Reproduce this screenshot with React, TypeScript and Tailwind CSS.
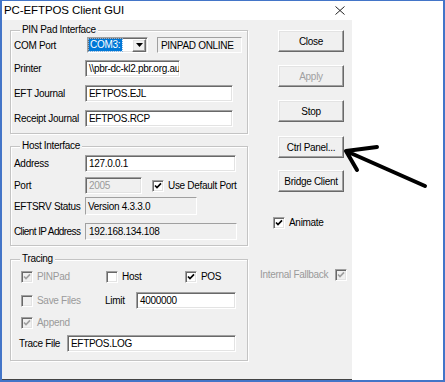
import React from 'react';

const sunken =
  'border border-t-[#a0a0a0] border-l-[#a0a0a0] border-b-white border-r-white shadow-[inset_1px_1px_0_#696969,inset_-1px_-1px_0_#e3e3e3]';
const staticEdge = 'border border-t-[#a0a0a0] border-l-[#a0a0a0] border-b-white border-r-white';
const raised =
  'border border-t-white border-l-white border-b-[#696969] border-r-[#696969] shadow-[inset_-1px_-1px_0_#a0a0a0,inset_1px_1px_0_#e3e3e3]';

function Field({ className, children, gray, dim }: { className: string; children: React.ReactNode; gray?: boolean; dim?: boolean }) {
  return (
    <div
      className={`${sunken} ${gray ? 'bg-[#f0f0f0]' : 'bg-white'} ${dim ? 'text-[#9a9a9a]' : 'text-black'} flex items-center overflow-hidden whitespace-nowrap pl-[3px] ${className}`}
    >
      {children}
    </div>
  );
}

function Static({ className, children }: { className: string; children: React.ReactNode }) {
  return (
    <div className={`${staticEdge} bg-[#f0f0f0] flex items-center overflow-hidden whitespace-nowrap ${className}`}>{children}</div>
  );
}

function Check({ checked, disabled }: { checked?: boolean; disabled?: boolean }) {
  return (
    <span className={`${sunken} ${disabled ? 'bg-[#f0f0f0]' : 'bg-white'} w-[12px] h-[12px] shrink-0 flex items-center justify-center`}>
      {checked && (
        <svg width="8" height="8" viewBox="0 0 8 8">
          <path d="M1 3.5 L3 5.6 L7 1.4" fill="none" stroke={disabled ? '#a0a0a0' : '#000'} strokeWidth="1.7" />
        </svg>
      )}
    </span>
  );
}

function CheckLabel({ label, checked, disabled, className }: { label: string; checked?: boolean; disabled?: boolean; className?: string }) {
  return (
    <div className={`flex items-center gap-[4px] h-[13px] whitespace-nowrap ${disabled ? 'text-[#9a9a9a]' : 'text-black'} ${className ?? ''}`}>
      <Check checked={checked} disabled={disabled} />
      <span>{label}</span>
    </div>
  );
}

function Btn({ label, disabled, className }: { label: string; disabled?: boolean; className: string }) {
  return (
    <div
      className={`${raised} bg-[#f0f0f0] ml-[30px] w-[66px] h-[22px] flex items-center justify-center ${disabled ? 'text-[#a0a0a0]' : 'text-black'} ${className}`}
    >
      {label}
    </div>
  );
}

function Group({ title, className, children }: { title: string; className: string; children: React.ReactNode }) {
  return (
    <fieldset className={`border border-[#c4c4c4] shadow-[inset_1px_1px_0_#fff,1px_1px_0_#fff] pl-[3px] ${className}`}>
      <legend className="ml-[6px] px-[2px] leading-[12px] bg-[#f0f0f0]">{title}</legend>
      {children}
    </fieldset>
  );
}

export default function App() {
  return (
    <div className="w-[445px] h-[382px] bg-white border-[#4375c8] border-t border-x-2 border-b-2 flex flex-col relative text-[10px] tracking-[-0.3px] font-['Liberation_Sans',Arial,sans-serif] text-black">
      {/* title bar */}
      <div className="h-[19px] flex items-center pl-[2px] shrink-0">
        <span className="text-[11.5px] tracking-[-0.1px]">PC-EFTPOS Client GUI</span>
        <svg className="ml-auto mr-[98px]" width="10" height="9" viewBox="0 0 10 9">
          <path d="M0.5 0.5 L9.5 8.5 M9.5 0.5 L0.5 8.5" stroke="#222" strokeWidth="1" />
        </svg>
      </div>

      <div className="flex-1 flex">
        <div className="w-[350px] bg-[#f0f0f0] border-b border-[#444] flex pl-[8px] pt-[4px]">
          {/* left column */}
          <div className="w-[238px] flex flex-col">
            <Group title="PIN Pad Interface" className="pb-[6px]">
              <div className="flex items-center h-[16px] mt-[1px]">
                <span className="w-[71px]">COM Port</span>
                <div className={`${sunken} bg-white ml-[2px] w-[61px] h-[16px] flex items-center pl-[1px] pr-[1px]`}>
                  <span className="bg-[#0078d7] text-white h-[12px] leading-[12px] pl-[1px] pr-[2px] whitespace-nowrap outline-1 outline-dotted outline-[#7fb4e6]">
                    COM3:
                  </span>
                  <span className={`${raised} bg-[#f0f0f0] ml-auto w-[14px] h-[13px] flex items-center justify-center`}>
                    <svg width="7" height="4" viewBox="0 0 7 4">
                      <path d="M0 0 H7 L3.5 4 Z" fill="#000" />
                    </svg>
                  </span>
                </div>
                <Static className="ml-[9px] w-[85px] h-[16px] pl-[3px]">PINPAD ONLINE</Static>
              </div>
              <div className="flex items-center h-[17px] mt-[7px]">
                <span className="w-[71px]">Printer</span>
                <Field className="w-[95px] h-[17px]">\\pbr-dc-kl2.pbr.org.au</Field>
              </div>
              <div className="flex items-center h-[17px] mt-[8px]">
                <span className="w-[71px]">EFT Journal</span>
                <Field className="w-[148px] h-[17px]">EFTPOS.EJL</Field>
              </div>
              <div className="flex items-center h-[17px] mt-[8px]">
                <span className="w-[71px]">Receipt Journal</span>
                <Field className="w-[148px] h-[17px]">EFTPOS.RCP</Field>
              </div>
            </Group>

            <Group title="Host Interface" className="mt-[6px] pb-[5px]">
              <div className="flex items-center h-[17px] mt-[3px]">
                <span className="w-[71px]">Address</span>
                <Field className="w-[151px] h-[17px]">127.0.0.1</Field>
              </div>
              <div className="flex items-center h-[17px] mt-[5px]">
                <span className="w-[71px]">Port</span>
                <Field className="w-[57px] h-[17px]" gray dim>
                  2005
                </Field>
                <CheckLabel label="Use Default Port" checked className="ml-[10px]" />
              </div>
              <div className="flex items-center h-[18px] mt-[3px]">
                <span className="w-[71px]">EFTSRV Status</span>
                <Static className="w-[112px] h-[18px] pl-[2px]">Version 4.3.3.0</Static>
              </div>
              <div className="flex items-center h-[17px] mt-[8px]">
                <span className="w-[71px] whitespace-nowrap tracking-[-0.6px]">Client IP Address</span>
                <Static className="w-[152px] h-[17px] pl-[3px]">192.168.134.108</Static>
              </div>
            </Group>

            <Group title="Tracing" className="mt-[7px] pb-[8px]">
              <div className="flex items-center h-[13px] mt-[5px] pl-[7px]">
                <CheckLabel label="PINPad" checked disabled className="w-[85px]" />
                <CheckLabel label="Host" className="w-[79px]" />
                <CheckLabel label="POS" checked />
              </div>
              <div className="flex items-center h-[17px] mt-[9px] pl-[7px]">
                <CheckLabel label="Save Files" disabled className="w-[84px]" />
                <span className="w-[31px]">Limit</span>
                <Field className="w-[100px] h-[17px]">4000000</Field>
              </div>
              <div className="flex items-center h-[13px] mt-[7px] pl-[7px]">
                <CheckLabel label="Append" checked disabled />
              </div>
              <div className="flex items-center h-[17px] mt-[6px] pl-[5px]">
                <span className="w-[48px] whitespace-nowrap">Trace File</span>
                <Field className="w-[169px] h-[17px]">EFTPOS.LOG</Field>
              </div>
            </Group>
          </div>

          {/* right column */}
          <div className="flex flex-col">
            <Btn label="Close" className="mt-[6px]" />
            <Btn label="Apply" disabled className="mt-[13px]" />
            <Btn label="Stop" className="mt-[13px]" />
            <Btn label="Ctrl Panel..." className="mt-[14px]" />
            <Btn label="Bridge Client" className="mt-[12px]" />
            <CheckLabel label="Animate" checked className="ml-[25px] mt-[24px]" />
            <div className="flex items-center ml-[12px] mt-[39px] h-[13px] text-[#9a9a9a] gap-[7px] whitespace-nowrap">
              <span>Internal Fallback</span>
              <Check checked disabled />
            </div>
          </div>
        </div>
      </div>

      {/* annotation arrow */}
      <svg className="absolute left-[-2px] top-[-1px] pointer-events-none" width="445" height="382" viewBox="0 0 445 382">
        <path
          d="M425 186 L346 151 M346 151 L377 147 M346 151 L357 170"
          fill="none"
          stroke="#000"
          strokeWidth="4"
          strokeLinecap="round"
          strokeLinejoin="round"
        />
      </svg>
    </div>
  );
}
